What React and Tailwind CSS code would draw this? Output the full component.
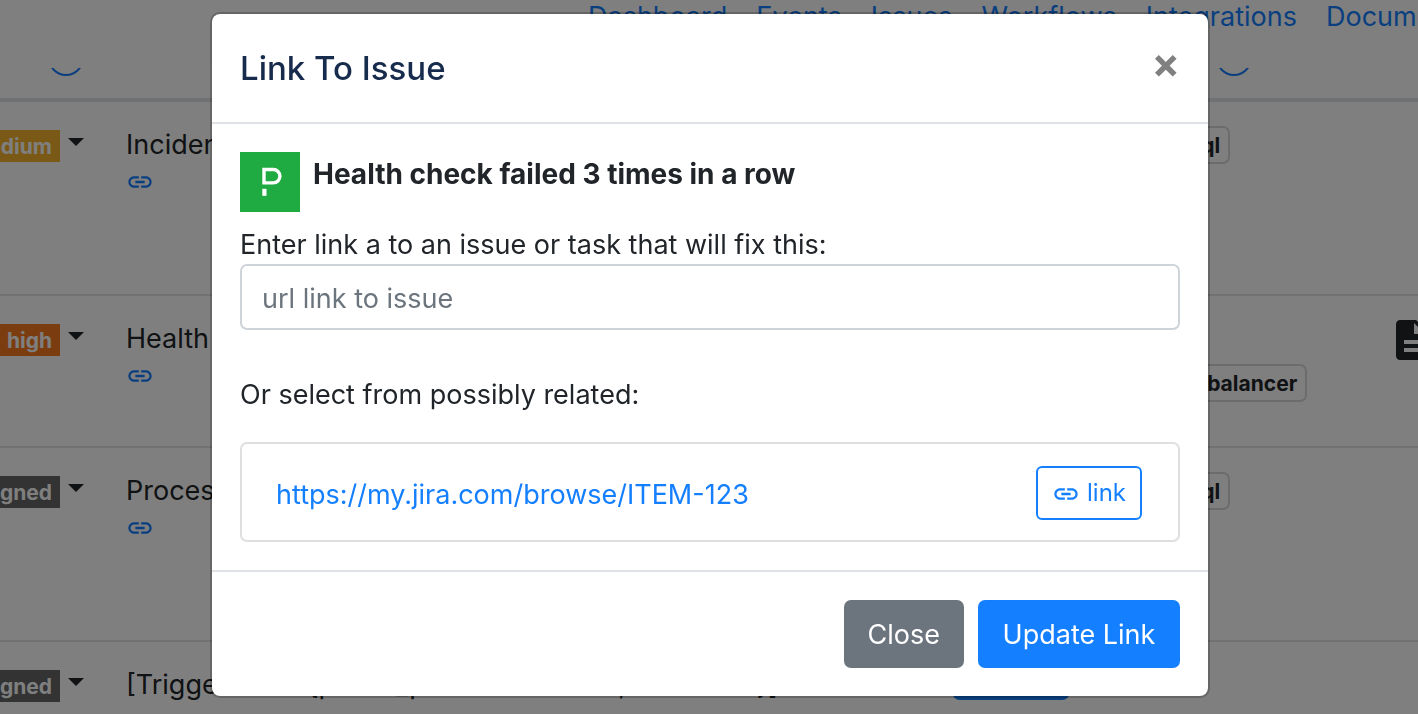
import React from "react";
import { MdDescription } from "react-icons/md";

const LINK_PATH =
  "M3.9 12c0-1.71 1.39-3.1 3.1-3.1h4V7H7c-2.76 0-5 2.24-5 5s2.24 5 5 5h4v-1.9H7c-1.71 0-3.1-1.39-3.1-3.1zM8 13h8v-2H8v2zm9-6h-4v1.9h4c1.71 0 3.1 1.39 3.1 3.1s-1.39 3.1-3.1 3.1h-4V17h4c2.76 0 5-2.24 5-5s-2.24-5-5-5z";

function LinkIcon({ className }) {
  return (
    <svg viewBox="0 0 24 24" fill="currentColor" aria-hidden="true" className={className}>
      <path d={LINK_PATH} />
    </svg>
  );
}

function HelpRing() {
  return <span className="inline-block size-9 shrink-0 rounded-full border-2 border-[#147fff]" />;
}

const NAV = ["Dashboard", "Events", "Issues", "Workflows", "Integrations", "Documentation"];

const ROWS = [
  { level: "medium", color: "bg-[#f5b32e]", title: "Incident on mysql", tags: ["mysql"], height: "h-[195px]" },
  { level: "high", color: "bg-[#f67b1f]", title: "Health check failed 3 times in a row", tags: ["api", "load balancer"], doc: true, height: "h-[152px]" },
  { level: "unassigned", color: "bg-[#666666]", title: "Process is down", tags: ["mysql"], height: "h-[194px]" },
  { level: "unassigned", color: "bg-[#666666]", title: "[Triggered on {public_port:25672north,instance:a}]", tags: [], pill: "open", height: "h-[194px]" },
];

function IssueRow({ row }) {
  return (
    <tr className={`${row.height} border-b-2 border-[#dee2e6] align-top`}>
      <td className="pt-7">
        <button type="button" className="flex w-[84px] items-start justify-end gap-2">
          <span className={`${row.color} h-8 px-2 text-[21px] leading-[34px] font-bold text-white`}>{row.level}</span>
          <svg viewBox="0 0 16 8" className="mt-2 h-2 w-4 shrink-0 text-[#212529]" fill="currentColor" aria-hidden="true">
            <path d="M0 0h16L8 8z" />
          </svg>
        </button>
      </td>
      <td className="px-[21px] pt-[22px] whitespace-nowrap">
        <div>{row.title}</div>
        <a href="#link" aria-label="Linked issue" className="block w-7 pt-0.5 text-[#147fff]">
          <LinkIcon className="size-7" />
        </a>
      </td>
      <td className="px-[21px] pt-[22px]">
        {row.pill && (
          <span className="block w-[118px] rounded-[8px] bg-[#147fff] text-center text-[21px] leading-9 text-white">
            {row.pill}
          </span>
        )}
      </td>
      <td className="px-[21px] pt-6">
        <div className="flex flex-col items-start gap-[6px]">
          {row.tags.map((t) => (
            <span key={t} className="h-[38px] rounded-[7px] border-2 border-[#d8d8d8] px-2 text-[21px] leading-9 font-bold">
              {t}
            </span>
          ))}
        </div>
      </td>
      <td className="pt-5 pl-[21px]">{row.doc && <MdDescription className="size-12 max-w-none" />}</td>
    </tr>
  );
}

function Page() {
  return (
    <div className="h-screen overflow-hidden bg-white">
      <header className="fixed inset-x-0 top-0 h-[68px] overflow-hidden bg-white">
        <nav className="flex gap-[29px] pl-[588px] leading-[34px] whitespace-nowrap text-[#147fff]">
          {NAV.map((n) => (
            <a key={n} href={`#${n.toLowerCase()}`}>{n}</a>
          ))}
        </nav>
      </header>
      <main className="pt-4">
        <table className="w-full table-fixed border-collapse text-left">
          <thead>
            <tr className="h-[84px] border-b-4 border-[#dee2e6] align-top">
              <th className="w-[105px] pt-6">
                <span className="flex w-[84px] items-center justify-end gap-2 leading-9">Status <HelpRing /></span>
              </th>
              <th className="px-[21px] pt-6 leading-9">Title</th>
              <th className="w-[196px]" aria-label="State" />
              <th className="w-[240px] px-[21px] pt-6 leading-9">
                <span className="flex items-center gap-1">Tags <HelpRing /></span>
              </th>
              <th className="w-[51px]" aria-label="Notes" />
            </tr>
          </thead>
          <tbody>
            {ROWS.map((r, i) => (
              <IssueRow key={i} row={r} />
            ))}
          </tbody>
        </table>
      </main>
    </div>
  );
}

function LinkDialog() {
  return (
    <div className="fixed inset-0 flex items-start justify-center bg-black/50 pt-3 pl-0.5">
      <section
        role="dialog"
        aria-modal="true"
        aria-labelledby="dialog-title"
        className="w-full max-w-[1000px] rounded-[10px] border-2 border-black/20 bg-white bg-clip-padding"
      >
        <div className="flex items-start justify-between border-b-2 border-[#dee2e6] p-7">
          <h2 id="dialog-title" className="text-[33px] leading-[52px] font-medium text-[#172b4d]">Link To Issue</h2>
          <button type="button" aria-label="Close dialog" className="text-[42px] leading-[42px] font-bold text-[#808080]">
            ×
          </button>
        </div>
        <div className="p-7">
          <div className="flex items-start gap-[13px]">
            <svg viewBox="0 0 60 60" className="size-[60px] shrink-0" role="img" aria-label="PagerDuty">
              <rect width="60" height="60" fill="#1fab41" />
              <path d="M24 17.5h9.2a6.7 6.7 0 0 1 0 13.4H24z" fill="none" stroke="#fff" strokeWidth="3.4" />
              <rect x="22.3" y="36.8" width="4.2" height="7" fill="#fff" />
            </svg>
            <strong className="text-[28px] leading-[44px] font-bold">Health check failed 3 times in a row</strong>
          </div>
          <label htmlFor="issue-url" className="mt-[10px] block pt-1 leading-[38px]">
            Enter link a to an issue or task that will fix this:
          </label>
          <input
            id="issue-url"
            type="text"
            placeholder="url link to issue"
            className="block h-[66px] w-full rounded-[7px] border-2 border-[#ced4da] px-5 pt-0.5 placeholder:text-[#6c757d]"
          />
          <p className="mt-11">Or select from possibly related:</p>
          <div className="mt-[26px] flex h-[100px] items-center justify-between rounded-[7px] border-2 border-[#dfdfdf] pt-0.5 pr-9 pl-[34px]">
            <a href="https://my.jira.com/browse/ITEM-123" className="pt-1 text-[#147fff]">https://my.jira.com/browse/ITEM-123</a>
            <button
              type="button"
              className="flex h-[54px] items-center gap-[7px] rounded-[6px] border-2 border-[#147fff] px-[14px] text-[24px] text-[#147fff]"
            >
              <LinkIcon className="mt-0.5 size-7" />
              link
            </button>
          </div>
        </div>
        <div className="flex justify-end gap-[14px] border-t-2 border-[#dee2e6] p-7">
          <button type="button" className="h-[68px] rounded-[7px] bg-[#6c757d] px-6 pt-0.5 text-white">Close</button>
          <button type="button" className="h-[68px] w-[202px] rounded-[7px] bg-[#147fff] pt-0.5 text-white">Update Link</button>
        </div>
      </section>
    </div>
  );
}

export default function App() {
  return (
    <div className="font-['Inter',sans-serif] text-[27px] leading-[42px] text-[#212529]">
      <Page />
      <LinkDialog />
    </div>
  );
}
